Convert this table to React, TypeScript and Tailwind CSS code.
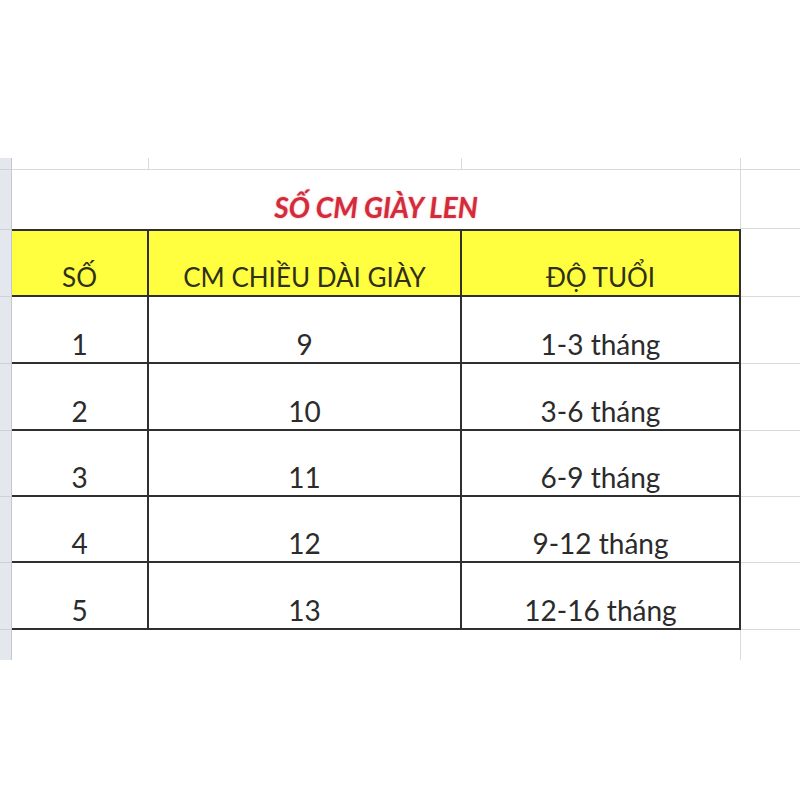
import React from "react";

const font = { fontFamily: "Lato, 'Open Sans', 'Noto Sans', sans-serif" };

type Row = { so: string; cm: string; age: string; h: string };

const rows: Row[] = [
  { so: "1", cm: "9", age: "1-3 tháng", h: "h-[67px]" },
  { so: "2", cm: "10", age: "3-6 tháng", h: "h-[67px]" },
  { so: "3", cm: "11", age: "6-9 tháng", h: "h-[66px]" },
  { so: "4", cm: "12", age: "9-12 tháng", h: "h-[66px]" },
  { so: "5", cm: "13", age: "12-16 tháng", h: "h-[67px]" },
];

function Gutter({ extra = "" }: { extra?: string }) {
  return <div className={`w-[12px] shrink-0 bg-[#e4e8ee] border-r border-[#c4c8ce] border-b border-b-[#cdd1d6] ${extra}`} />;
}

export default function App() {
  return (
    <div className="w-[800px] h-[800px] bg-white pt-[158px] text-[#2b2b2b]" style={font}>
      {/* top strip row */}
      <div className="flex h-[12px]">
        <Gutter />
        <div className="w-[137px] border-b border-r border-[#dadada]" />
        <div className="w-[313px] border-b border-r border-[#dadada]" />
        <div className="w-[279px] border-b border-r border-[#dadada]" />
        <div className="flex-1 border-b border-[#dadada]" />
      </div>
      {/* title row */}
      <div className="flex h-[59px]">
        <Gutter extra="border-b-0" />
        <div className="w-[729px] border-r border-[#dadada] flex items-end justify-center pb-[8px]">
          <span className="text-[28px] leading-none font-bold italic text-[#d42b3b] [text-shadow:0_0_2px_rgba(212,43,59,0.45)]">
            SỐ CM GIÀY LEN
          </span>
        </div>
        <div className="flex-1 border-b border-[#dadada]" />
      </div>
      {/* header row */}
      <div className="flex h-[68px]">
        <Gutter extra="border-t border-t-[#cdd1d6]" />
        <div className="w-[137px] bg-[#ffff40] border-t-2 border-b-2 border-r-2 border-[#2f2f2f] flex items-end justify-center pb-[5px]">
          <span className="text-[26px] leading-none text-[#303018]">SỐ</span>
        </div>
        <div className="w-[313px] bg-[#ffff40] border-t-2 border-b-2 border-r-2 border-[#2f2f2f] flex items-end justify-center pb-[5px]">
          <span className="text-[26px] leading-none text-[#303018]">CM CHIỀU DÀI GIÀY</span>
        </div>
        <div className="w-[279px] bg-[#ffff40] border-t-2 border-b-2 border-r-2 border-[#2f2f2f] flex items-end justify-center pb-[5px]">
          <span className="text-[26px] leading-none text-[#303018]">ĐỘ TUỔI</span>
        </div>
        <div className="flex-1 border-b border-[#dadada]" />
      </div>
      {rows.map((r) => (
        <div key={r.so} className={`flex ${r.h}`}>
          <Gutter />
          <div className="w-[137px] border-b-2 border-r-2 border-[#2f2f2f] flex items-end justify-center pb-[4px]">
            <span className="text-[28px] leading-none">{r.so}</span>
          </div>
          <div className="w-[313px] border-b-2 border-r-2 border-[#2f2f2f] flex items-end justify-center pb-[4px]">
            <span className="text-[28px] leading-none">{r.cm}</span>
          </div>
          <div className="w-[279px] border-b-2 border-r-2 border-[#2f2f2f] flex items-end justify-center pb-[4px]">
            <span className="text-[28px] leading-none">{r.age}</span>
          </div>
          <div className="flex-1 border-b border-[#dadada]" />
        </div>
      ))}
      {/* bottom row */}
      <div className="flex h-[30px]">
        <div className="w-[12px] shrink-0 bg-[#e4e8ee] border-r border-[#c4c8ce]" />
        <div className="w-[729px] border-r border-[#dadada]" />
        <div className="flex-1" />
      </div>
    </div>
  );
}
